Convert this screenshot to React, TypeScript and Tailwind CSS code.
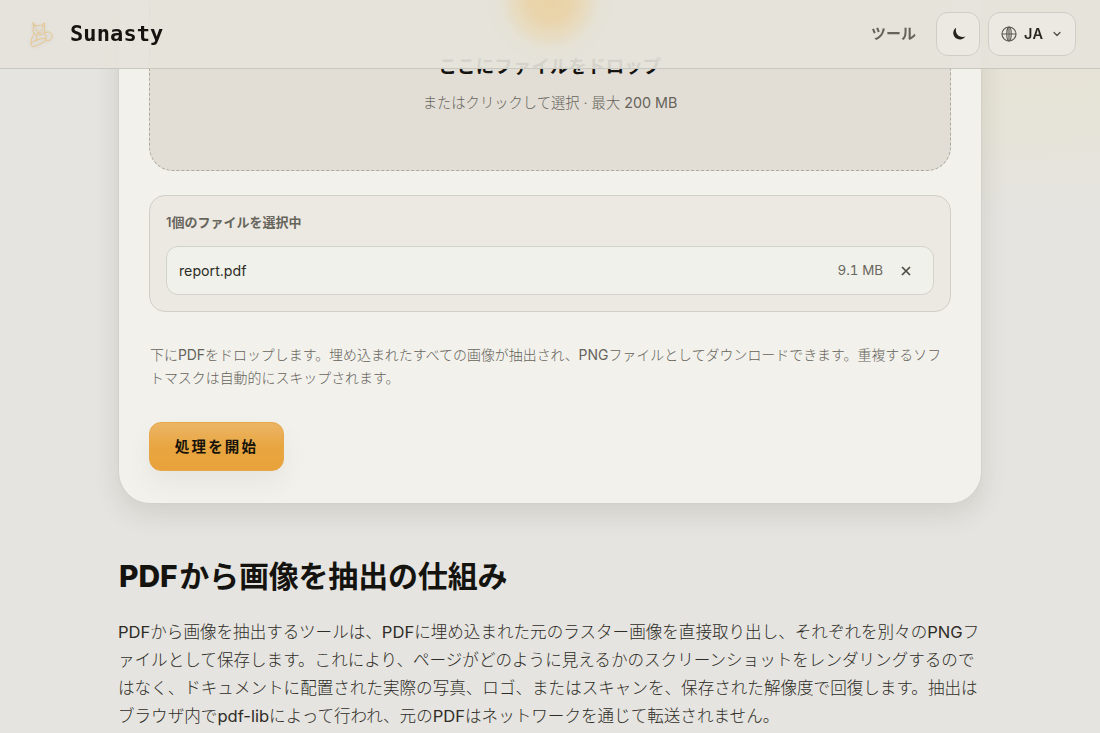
import { ChevronDown } from "lucide-react";

const hintLines = [
    ["下に", "PDF", "をドロップします。埋め込まれたすべての画像が抽出され、", "PNG", "ファイルとしてダウンロードできます。重複するソフ"],
    ["トマスクは自動的にスキップされます。"],
];

const articleLines = [
    ["", "PDF", "から画像を抽出するツールは、", "PDF", "に埋め込まれた元のラスター画像を直接取り出し、それぞれを別々の", "PNG", "フ"],
    ["ァイルとして保存します。これにより、ページがどのように見えるかのスクリーンショットをレンダリングするので"],
    ["はなく、ドキュメントに配置された実際の写真、ロゴ、またはスキャンを、保存された解像度で回復します。抽出は"],
    ["ブラウザ内で", "pdf-lib", "によって行われ、元の", "PDF", "はネットワークを通じて転送されません。"],
];

/** Odd parts are Latin words, set one weight heavier than the kana */
function MixedLine({ parts }: { parts: string[] }) {
    return (
        <span className="block whitespace-nowrap">
            {parts.map((part, i) =>
                i % 2 === 1 ? (
                    <span key={i} className="font-normal">
                        {part}
                    </span>
                ) : (
                    part
                )
            )}
        </span>
    );
}

function FoxLogo() {
    return (
        <svg
            viewBox="0 0 28 30"
            className="h-[27px] w-[25px] drop-shadow-sm"
            fill="none"
            stroke="#e9bd77"
            strokeWidth="1"
            strokeLinecap="round"
            strokeLinejoin="round"
            opacity="0.85"
        >
            <path d="M4.5 2 5 8.5c-.8 1.5-.7 3.5.4 4.8 1.3 1.7 3.6 2.3 6.3 2.1 3-.2 5.2-1.5 5.9-3.7.4-1.2.1-2.3-.4-3.2L17.5 2l-4.3 3.2c-1.5-.5-3.1-.5-4.6 0z" />
            <path d="m6.4 4.7.5 2.3m8.9-2.3-.5 2.3M7.5 10l2 .4m5.8-.4-2 .4m-1.9 1v1.2m-2 .2c1 1 2.9 1 3.9 0" />
            <path d="M5.5 14c-1.6 3-3 6-3.2 9.5M17 13c2 2 2.5 4.5 2 7M8.4 16.3c.6 2 .3 4-1 5.7" />
            <path d="M2.5 24.3C5 22.5 13 19.2 17 19.4c2.4.2 2.8 2 .9 3.2-3.6 2.2-8.6 5-12.3 5.8-2.8.5-4.6-1.9-3.1-4.1z" />
            <path d="M18.5 13c2.5-1.8 6.2-.8 7.2 1.7 1.1 2.7-.2 5.9-2.7 6.8-1.4.4-2.8.3-3.9-.2" />
        </svg>
    );
}

function Header() {
    return (
        <header className="fixed inset-x-0 top-0 z-20 flex h-[69px] items-center justify-between overflow-hidden border-b border-[#c8c7c0] bg-[#e5e3da]/92 pl-[29px] pr-6">
            <div className="pointer-events-none absolute -top-[64px] left-1/2 -ml-[64px] h-[128px] w-[128px] bg-[radial-gradient(circle_closest-side,#ead2a4_0%,#e9d5ae_35%,rgba(232,217,184,0.7)_58%,rgba(230,223,203,0.3)_78%,transparent_100%)]" />
            <a className="relative flex items-center gap-4">
                <FoxLogo />
                <span className="font-['DejaVu_Sans_Mono',monospace] text-[22px] font-bold leading-8 tracking-[0.1px] text-[#14130f]">
                    Sunasty
                </span>
            </a>
            <nav className="relative flex items-center">
                <a className="mr-5 text-[15px] font-semibold text-[#65635a]">ツール</a>
                <button className="mr-2 flex h-11 w-11 items-center justify-center rounded-xl border border-[#cfcec6] bg-[#ebe9e2]">
                    <svg viewBox="0 0 16 16" className="ml-0.5 h-4 w-4" fill="#25241f">
                        <path d="M5.1 1.8C2.8 3.2 1.7 6 2.5 8.8c1 3.5 4.5 5.3 7.9 4.5 1.8-.4 3.2-1.6 3.9-3-.8.4-1.2.5-2 .6-3.2.5-6.1-1.3-7.1-4.3-.5-1.6-.5-3.2-.1-4.8Z" />
                    </svg>
                </button>
                <button className="flex h-11 w-[88px] items-center rounded-xl border border-[#cfcec6] bg-[#ebe9e2] pl-3">
                    <svg viewBox="0 0 16 16" className="h-4 w-4" fill="none" stroke="#5c5a50" strokeWidth="1.2">
                        <circle cx="8" cy="8" r="7" />
                        <path d="M1 8h14M8 1v14" />
                        <ellipse cx="8" cy="8" rx="2.2" ry="7" />
                    </svg>
                    <span className="ml-[7px] text-[14.5px] font-semibold tracking-[0.02em] text-[#28261f]">JA</span>
                    <ChevronDown className="ml-[8px] h-3 w-3 text-[#4c4a42]" strokeWidth={2.4} />
                </button>
            </nav>
        </header>
    );
}

function ToolCard() {
    return (
        <section className="rounded-b-[32px] border border-t-0 border-[#d2d1ca] bg-[#f2f1ec] px-[30px] pb-8 shadow-[0_10px_26px_rgba(70,68,45,0.13)]">
            <div className="flex h-[171px] flex-col items-center rounded-b-3xl border border-t-0 border-dashed border-[#aaa99a] bg-[#e2ded6] pt-[52px]">
                <h3 className="text-[18.4px] font-semibold leading-7 tracking-[0.01em] text-[#14130f]">
                    ここにファイルをドロップ
                </h3>
                <p className="mt-[11px] text-[14.3px] font-light leading-[23px] text-[#65635a]">
                    またはクリックして選択 · 最大 <span className="font-normal">200 MB</span>
                </p>
            </div>

            <div className="mt-6 h-[117px] rounded-2xl border border-[#d0cfc8] bg-[#ece9e2] px-4 pt-4">
                <p className="text-[13px] font-semibold leading-[21px] text-[#67655b]">1個のファイルを選択中</p>
                <div className="mt-[13px] flex h-[49px] items-center rounded-xl border border-[#d3d2cb] bg-[#f1f1ec] pl-3 pr-[22px]">
                    <span className="text-[14.2px] text-[#2e2c26]">report.pdf</span>
                    <span className="ml-auto text-[13.4px] tabular-nums text-[#69675d]">9.1 MB</span>
                    <svg viewBox="0 0 10 10" className="ml-[18px] h-2.5 w-2.5" stroke="#4e4c43" strokeWidth="1.7">
                        <path d="m1 1 8 8M9 1 1 9" />
                    </svg>
                </div>
            </div>

            <p className="mt-[31px] pl-px text-[13.95px] font-light leading-[23px] text-[#65635a]">
                {hintLines.map((parts, i) => (
                    <MixedLine key={i} parts={parts} />
                ))}
            </p>

            <button className="mt-[33px] flex h-[49px] w-[135px] items-center justify-center rounded-xl border border-[#e5a748] bg-linear-to-b from-[#ecb565] via-[#e8a640] to-[#e9a23b] text-[14.5px] font-semibold tracking-[0.15em] text-[#17130a] shadow-[0_12px_24px_rgba(80,78,60,0.07)]">
                処理を開始
            </button>
        </section>
    );
}

export default function App() {
    return (
        <div className="h-[733px] w-[1100px] overflow-hidden bg-[#e5e4e0] bg-[radial-gradient(ellipse_460px_215px_at_1020px_0px,#e7e2d5_0%,#e6e3d8_60%,transparent_100%)] font-['Inter','Noto_Sans_CJK_JP',sans-serif]" lang="ja">
            <Header />
            <main className="mx-auto w-[864px]">
                <ToolCard />
                <article className="pt-[51px]">
                    <h2 className="whitespace-nowrap text-[30px] font-semibold leading-[42px] tracking-[-0.006em] text-[#14130f]">
                        <span className="ml-px mr-0.5 font-extrabold">PDF</span>から画像を抽出の仕組み
                    </h2>
                    <p className="mt-[21px] text-[16.57px] font-light leading-7 text-[#2e2c26]">
                        {articleLines.map((parts, i) => (
                            <MixedLine key={i} parts={parts} />
                        ))}
                    </p>
                </article>
            </main>
        </div>
    );
}
